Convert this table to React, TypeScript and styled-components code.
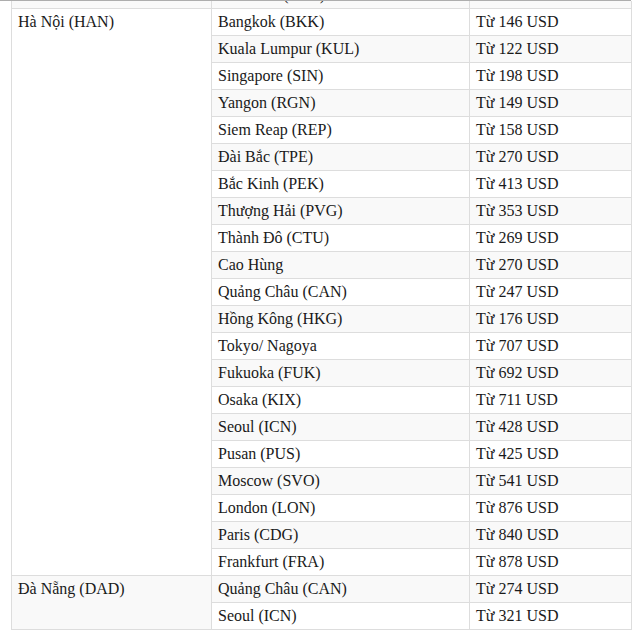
import React from "react";
import styled, { createGlobalStyle } from "styled-components";

const Global = createGlobalStyle`
  html, body { margin: 0; padding: 0; background: #fff; }
  body { font-family: "Liberation Serif", "Times New Roman", serif; }
`;

const Rule = styled.div`
  width: 631px;
  height: 1px;
  background: #adadad;
`;

const Viewport = styled.div`
  width: 638px;
  height: 634px;
  overflow: hidden;
`;

const Table = styled.table`
  margin: -20px 0 0 11px;
  border-collapse: collapse;
  table-layout: fixed;
  width: 620px;
  font-family: "Liberation Serif", "Times New Roman", serif;
  font-size: 16px;
  line-height: 18px;
  color: #1a1a1a;
`;

const Row = styled.tr<{ $striped: boolean }>`
  background: ${(p) => (p.$striped ? "#f9f9f9" : "#fff")};
`;

const Cell = styled.td`
  border: 1px solid #ddd;
  padding: 4px 6px;
  vertical-align: top;
  white-space: nowrap;
  font-family: "Liberation Serif", "Times New Roman", serif;
  font-size: 16px;
`;

type Group = { origin: string; items: [string, number][] };

const groups: Group[] = [
  { origin: "", items: [["Vientiane (VTE)", 150]] },
  {
    origin: "Hà Nội (HAN)",
    items: [
      ["Bangkok (BKK)", 146],
      ["Kuala Lumpur (KUL)", 122],
      ["Singapore (SIN)", 198],
      ["Yangon (RGN)", 149],
      ["Siem Reap (REP)", 158],
      ["Đài Bắc (TPE)", 270],
      ["Bắc Kinh (PEK)", 413],
      ["Thượng Hải (PVG)", 353],
      ["Thành Đô (CTU)", 269],
      ["Cao Hùng", 270],
      ["Quảng Châu (CAN)", 247],
      ["Hồng Kông (HKG)", 176],
      ["Tokyo/ Nagoya", 707],
      ["Fukuoka (FUK)", 692],
      ["Osaka (KIX)", 711],
      ["Seoul (ICN)", 428],
      ["Pusan (PUS)", 425],
      ["Moscow (SVO)", 541],
      ["London (LON)", 876],
      ["Paris (CDG)", 840],
      ["Frankfurt (FRA)", 878],
    ],
  },
  {
    origin: "Đà Nẵng (DAD)",
    items: [
      ["Quảng Châu (CAN)", 274],
      ["Seoul (ICN)", 321],
    ],
  },
];

export default function App() {
  let idx = 0;
  return (
    <>
      <Global />
      <Rule />
      <Viewport>
        <Table>
          <colgroup>
            <col style={{ width: 200 }} />
            <col style={{ width: 258 }} />
            <col style={{ width: 162 }} />
          </colgroup>
          <tbody>
            {groups.map((g) =>
              g.items.map(([dest, price], i) => {
                const striped = idx % 2 === 0;
                idx++;
                return (
                  <Row key={g.origin + dest} $striped={striped}>
                    {i === 0 && <Cell rowSpan={g.items.length}>{g.origin}</Cell>}
                    <Cell>{dest}</Cell>
                    <Cell>Từ {price} USD</Cell>
                  </Row>
                );
              })
            )}
          </tbody>
        </Table>
      </Viewport>
    </>
  );
}
